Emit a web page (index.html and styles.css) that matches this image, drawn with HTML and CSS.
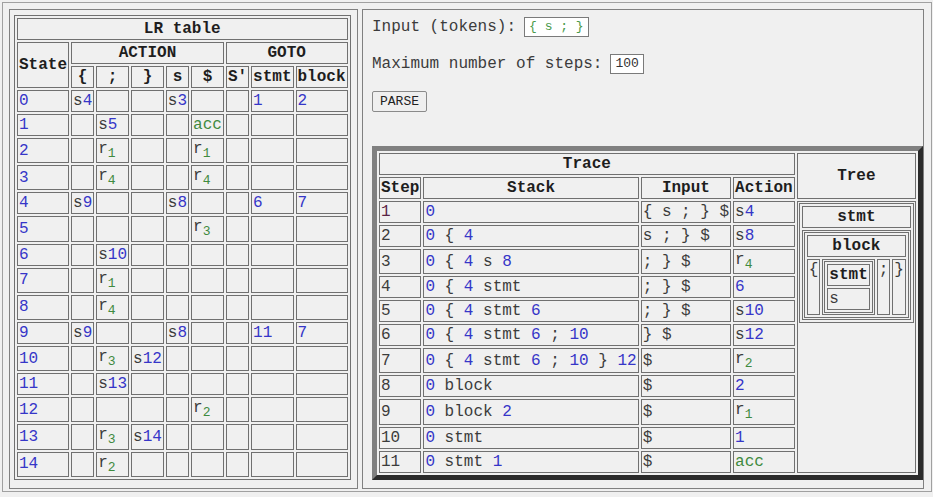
FILE: index.html
```html
<!DOCTYPE html>
<html>
<head>
<meta charset="utf-8">
<title>LR parser</title>
<link rel="stylesheet" href="styles.css">
</head>
<body>
<div class="frame">
  <div class="panel left">
    <table class="grid">
      <tr><th colspan="9">LR table</th></tr>
      <tr><th rowspan="2">State</th><th colspan="5">ACTION</th><th colspan="3">GOTO</th></tr>
      <tr><th>{</th><th>;</th><th>}</th><th>s</th><th>$</th><th>S'</th><th>stmt</th><th>block</th></tr>
      <tr><td class="n">0</td><td>s<span class="n">4</span></td><td></td><td></td><td>s<span class="n">3</span></td><td></td><td></td><td class="n">1</td><td class="n">2</td></tr>
      <tr><td class="n">1</td><td></td><td>s<span class="n">5</span></td><td></td><td></td><td class="g">acc</td><td></td><td></td><td></td></tr>
      <tr><td class="n">2</td><td></td><td>r<sub>1</sub></td><td></td><td></td><td>r<sub>1</sub></td><td></td><td></td><td></td></tr>
      <tr><td class="n">3</td><td></td><td>r<sub>4</sub></td><td></td><td></td><td>r<sub>4</sub></td><td></td><td></td><td></td></tr>
      <tr><td class="n">4</td><td>s<span class="n">9</span></td><td></td><td></td><td>s<span class="n">8</span></td><td></td><td></td><td class="n">6</td><td class="n">7</td></tr>
      <tr><td class="n">5</td><td></td><td></td><td></td><td></td><td>r<sub>3</sub></td><td></td><td></td><td></td></tr>
      <tr><td class="n">6</td><td></td><td>s<span class="n">10</span></td><td></td><td></td><td></td><td></td><td></td><td></td></tr>
      <tr><td class="n">7</td><td></td><td>r<sub>1</sub></td><td></td><td></td><td></td><td></td><td></td><td></td></tr>
      <tr><td class="n">8</td><td></td><td>r<sub>4</sub></td><td></td><td></td><td></td><td></td><td></td><td></td></tr>
      <tr><td class="n">9</td><td>s<span class="n">9</span></td><td></td><td></td><td>s<span class="n">8</span></td><td></td><td></td><td class="n">11</td><td class="n">7</td></tr>
      <tr><td class="n">10</td><td></td><td>r<sub>3</sub></td><td>s<span class="n">12</span></td><td></td><td></td><td></td><td></td><td></td></tr>
      <tr><td class="n">11</td><td></td><td>s<span class="n">13</span></td><td></td><td></td><td></td><td></td><td></td><td></td></tr>
      <tr><td class="n">12</td><td></td><td></td><td></td><td></td><td>r<sub>2</sub></td><td></td><td></td><td></td></tr>
      <tr><td class="n">13</td><td></td><td>r<sub>3</sub></td><td>s<span class="n">14</span></td><td></td><td></td><td></td><td></td><td></td></tr>
      <tr><td class="n">14</td><td></td><td>r<sub>2</sub></td><td></td><td></td><td></td><td></td><td></td><td></td></tr>
    </table>
  </div>
  <div class="panel right">
    <div class="field">Input (tokens):<span class="box tokens">{ s ; }</span></div>
    <div class="field">Maximum number of steps:<span class="box">100</span></div>
    <div class="field field-btn"><button class="btn" type="button">PARSE</button></div>
    <table class="grid trace">
      <tr><th colspan="4">Trace</th><th rowspan="2">Tree</th></tr>
      <tr><th>Step</th><th>Stack</th><th>Input</th><th>Action</th></tr>
      <tr><td class="first">1</td><td><span class="n">0</span></td><td>{ s ; } $</td><td>s<span class="n">4</span></td>
        <td rowspan="11" class="treecell">
          <table class="grid">
            <tr><th>stmt</th></tr>
            <tr><td>
              <table class="grid">
                <tr><th colspan="4">block</th></tr>
                <tr>
                  <td class="leaf">{</td>
                  <td class="leaf">
                    <table class="grid">
                      <tr><th>stmt</th></tr>
                      <tr><td>s</td></tr>
                    </table>
                  </td>
                  <td class="leaf">;</td>
                  <td class="leaf">}</td>
                </tr>
              </table>
            </td></tr>
          </table>
        </td>
      </tr>
      <tr><td>2</td><td><span class="n">0</span> { <span class="n">4</span></td><td>s ; } $</td><td>s<span class="n">8</span></td></tr>
      <tr><td>3</td><td><span class="n">0</span> { <span class="n">4</span> s <span class="n">8</span></td><td>; } $</td><td>r<sub>4</sub></td></tr>
      <tr><td>4</td><td><span class="n">0</span> { <span class="n">4</span> stmt</td><td>; } $</td><td class="n">6</td></tr>
      <tr><td>5</td><td><span class="n">0</span> { <span class="n">4</span> stmt <span class="n">6</span></td><td>; } $</td><td>s<span class="n">10</span></td></tr>
      <tr><td>6</td><td><span class="n">0</span> { <span class="n">4</span> stmt <span class="n">6</span> ; <span class="n">10</span></td><td>} $</td><td>s<span class="n">12</span></td></tr>
      <tr><td>7</td><td><span class="n">0</span> { <span class="n">4</span> stmt <span class="n">6</span> ; <span class="n">10</span> } <span class="n">12</span></td><td>$</td><td>r<sub>2</sub></td></tr>
      <tr><td>8</td><td><span class="n">0</span> block</td><td>$</td><td class="n">2</td></tr>
      <tr><td>9</td><td><span class="n">0</span> block <span class="n">2</span></td><td>$</td><td>r<sub>1</sub></td></tr>
      <tr><td>10</td><td><span class="n">0</span> stmt</td><td>$</td><td class="n">1</td></tr>
      <tr><td>11</td><td><span class="n">0</span> stmt <span class="n">1</span></td><td>$</td><td class="g">acc</td></tr>
    </table>
  </div>
</div>
</body>
</html>
```

FILE: styles.css
```css
html, body {
  margin: 0;
  background: #f0f0f0;
}
body {
  padding: 2px;
  font-family: "Liberation Mono", "Courier New", monospace;
  font-size: 16px;
  color: #3c3c3c;
}
.frame {
  display: flex;
  gap: 4px;
  width: 930px;
  height: 490px;
  box-sizing: border-box;
  border: 1px solid #a0a0a0;
  padding: 6px 7px 2px 6px;
}
.panel {
  border: 1px solid #808080;
  box-sizing: border-box;
}
.left {
  width: 349px;
  padding: 5px 0 0 4px;
}
.right {
  width: 562px;
  padding: 7px 0 0 9px;
}
table.grid {
  border-collapse: separate;
  border-spacing: 2px;
  border: 1px solid #707070;
}
.grid td, .grid th {
  border: 1px solid #707070;
  padding: 1px;
  text-align: left;
  white-space: nowrap;
  line-height: normal;
}
.grid th {
  text-align: center;
  font-weight: bold;
  color: #1e1e1e;
}
.n { color: #3636c8; }
.g { color: #3f8a3f; }
.first { color: #5a2346; }
sub {
  font-size: 13px;
  color: #3f8a3f;
}
.field {
  display: flex;
  align-items: center;
  gap: 8px;
  height: 20px;
  margin-bottom: 17px;
}
.field-btn {
  height: 21px;
  margin-bottom: 34px;
}
.box {
  display: inline-block;
  box-sizing: border-box;
  height: 20px;
  line-height: 18px;
  padding: 0 4px;
  border: 1px solid #7a7a7a;
  background: #ffffff;
  font-size: 13px;
  color: #333;
}
.tokens { color: #4a9a4a; }
.btn {
  height: 21px;
  box-sizing: border-box;
  padding: 0 7px;
  border: 1px solid #8a8a8a;
  border-radius: 2px;
  background: #efefef;
  font-family: "Liberation Mono", "Courier New", monospace;
  font-size: 13px;
  color: #222;
}
table.trace {
  border-width: 5px;
  border-style: solid;
  border-color: #808080 #2b2b2b #2b2b2b #808080;
}
.treecell { vertical-align: top; }
.leaf { vertical-align: top; }
```
